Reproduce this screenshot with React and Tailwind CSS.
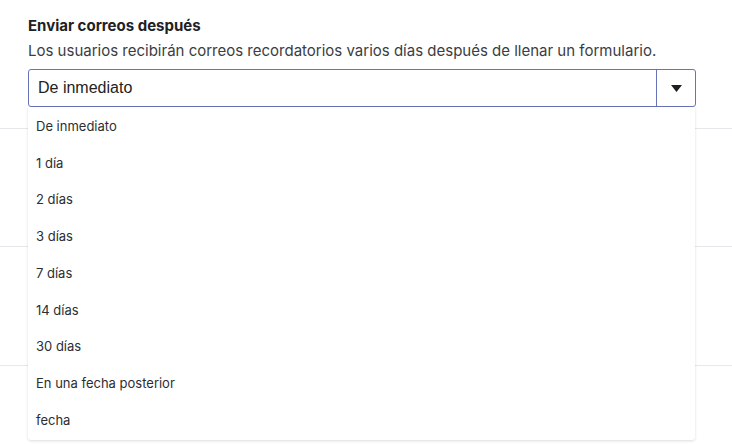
import React from 'react';

const options = [
  'De inmediato',
  '1 día',
  '2 días',
  '3 días',
  '7 días',
  '14 días',
  '30 días',
  'En una fecha posterior',
  'fecha',
];

function Divider() {
  return <div className="h-px bg-[#e5e7eb]" />;
}

export default function App() {
  return (
    <div className="relative w-[732px] h-[444px] overflow-hidden bg-white font-['Inter',sans-serif] text-[#2b2e33]">
      <div className="px-[28px] pt-[16px]">
        <h3 className="text-[15px] font-bold leading-[20px] text-[#1f2124]">Enviar correos después</h3>
        <p className="mt-[4px] text-[15px] leading-[22px] text-[#3a3d42]">
          Los usuarios recibirán correos recordatorios varios días después de llenar un formulario.
        </p>
        <div className="mt-[7px] flex h-[38px] w-[668px] rounded-[3px] border border-[#6874b8] bg-white">
          <div className="flex flex-1 items-center pl-[9px] font-['Liberation_Sans',sans-serif] text-[16px] text-[#222]">
            De inmediato
          </div>
          <div className="flex w-[39px] items-center justify-center border-l border-[#6874b8]">
            <svg width="11" height="7" viewBox="0 0 11 7">
              <path d="M0 0h11L5.5 7z" fill="#1f1f1f" />
            </svg>
          </div>
        </div>
      </div>
      <div className="mt-[21px]"><Divider /></div>
      <div className="h-[117px]" />
      <Divider />
      <div className="h-[118px]" />
      <Divider />
      <div className="absolute left-[28px] top-[107px] w-[667px] rounded-b-[3px] bg-white pt-[1.5px] pb-[1px] shadow-[0_1px_3px_rgba(0,0,0,0.14)]">
        {options.map((o) => (
          <div key={o} className="flex h-[36.7px] items-center px-[8px] text-[13px] text-[#2b2e33]">
            {o}
          </div>
        ))}
      </div>
    </div>
  );
}
